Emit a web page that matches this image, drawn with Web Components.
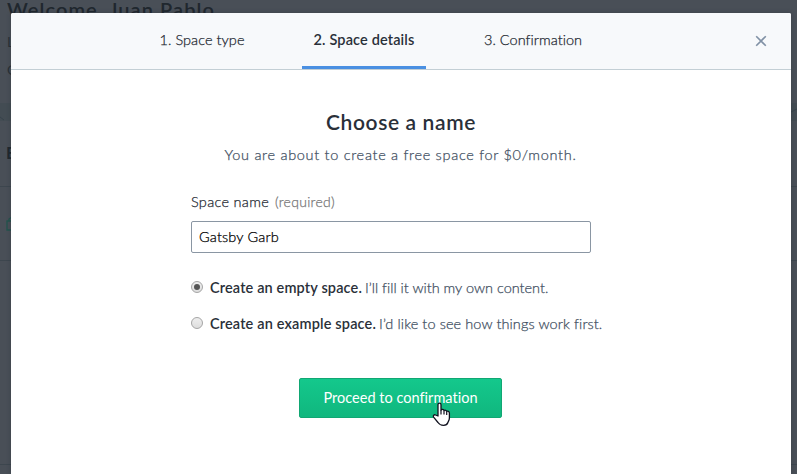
<!DOCTYPE html>
<html lang="en"><head><meta charset="utf-8"><title>Create space</title>
<style>html,body{margin:0;height:100%;overflow:hidden}body{font-family:Lato,"Open Sans",sans-serif;background:#494f57}</style></head>
<body><space-app></space-app>
<script>
const define=(name,html,init)=>customElements.define(name,class extends HTMLElement{
  connectedCallback(){if(this.shadowRoot)return;this.attachShadow({mode:'open'}).innerHTML=html;if(init)init(this,this.shadowRoot);}
});
// A single line of text tracked to a given width.
define('fit-text','<style>:host{display:block;white-space:nowrap;width:max-content}span{display:inline-block}</style><span><slot></slot></span>',(el,root)=>{
  const s=root.querySelector('span'),w=+el.getAttribute('w');
  requestAnimationFrame(()=>{const n=el.textContent.length;const d=(w-s.getBoundingClientRect().width)/n;s.style.letterSpacing=d+'px';});
});
define('page-behind',`<style>
:host{display:block;height:474px;background:#494f57;color:#20272e;overflow:hidden}
.hero{height:103px;box-sizing:border-box;padding-left:7px}
h1{font-size:20px;line-height:19px;font-weight:600;margin:0;height:28px}
p{margin:0;font-size:14px;line-height:28px;color:#292f35}
.strip{height:18px;background:#434c53;display:flex;justify-content:space-between;align-items:flex-end}
.strip svg{display:block}
.row{box-sizing:border-box;border-bottom:1px solid #3d464e}
.a{height:66px;padding:20px 0 0 6px;font-size:17px;line-height:24px;font-weight:700}
.b{height:74px;padding:29px 0 0 6px}.c{height:204px}
</style><div class="hero"><h1><fit-text w="208">Welcome, Juan Pablo</fit-text></h1><p>L</p><p>C</p></div>
<div class="strip"><svg width="12" height="18"><path d="M0 14l4 3" stroke="#37434b"/></svg><svg width="8" height="18"><path d="M0 10l8-4" stroke="#37434b"/></svg></div>
<div class="row a">E</div><div class="row b"><svg width="12" height="16" fill="none" stroke="#23544d" stroke-width="1.3"><path d="M1 5h10v9H1zM3 5V3l3-2 3 2v2"/></svg></div><div class="row c"></div>`);
define('step-tab',`<style>
:host{display:block;width:124px;height:56px;box-sizing:border-box;padding-top:17px;color:#1f2a33;font-size:14.5px;line-height:20px;font-weight:300}
:host([active]){border-bottom:3px solid #4a90e2;font-weight:600;color:#2a3039;-webkit-text-stroke:0}
div{display:flex;justify-content:center}</style><div><slot></slot></div>`);
define('close-button',`<style>:host{display:block;width:12px;height:12px}svg{display:block}</style>
<svg width="12" height="12" viewBox="0 0 12 12"><path d="M1.2 1.2l9.6 9.6M10.8 1.2L1.2 10.8" stroke="#8091a5" stroke-width="1.6"/></svg>`);
define('text-field',`<style>:host{display:flex;align-items:center;box-sizing:border-box;width:400px;height:32px;border:1px solid #8a96a3;border-radius:2px;padding:0 7px 1px;font-size:14.5px;line-height:20px;color:#000}</style><slot></slot>`);
define('radio-option',`<style>
:host{display:flex;align-items:center;height:20px;font-size:14.5px;line-height:20px;color:#3f4f62}
i{flex:none;width:12px;height:12px;box-sizing:border-box;border:1px solid #a5a5a5;border-radius:50%;background:linear-gradient(#eee,#ddd);display:grid;place-items:center;margin:-2px 7px 0 0}
:host([checked]) i::after{content:"";width:6px;height:6px;border-radius:50%;background:#555}
slot{display:block;flex:none}.h{font-weight:600;color:#2a3039;margin-right:3px;-webkit-text-stroke:0}</style><i></i><slot class="h" name="title"></slot><slot></slot>`);
define('action-button',`<style>:host{display:flex;justify-content:center;box-sizing:border-box;width:203px;height:40px;padding-top:9px;border:1px solid #11a773;border-radius:2px;background:linear-gradient(#14c88c,#10b77e);color:#fff;font-size:14.5px;font-weight:400;line-height:20px;-webkit-text-stroke:0}</style><slot></slot>`);
define('hand-cursor',`<style>:host{display:block}svg{display:block}</style><svg width="19" height="25" viewBox="0 0 19 25"><path d="M6 14V2.7C6 .5 9 .5 9 2.7V8c.8-1 2.6-.7 3 .6.9-.7 2.4-.4 2.7.8 1-.6 2.7 0 2.7 1.6V16c0 2-1 3.2-1.5 4.5-.5 1.7-2 2.8-4.4 2.8S7.300 22.500 6 20.500L1.600 15.200c-1-1.600.7-3 2-2.200z" fill="#fff" stroke="#11121f" stroke-width="1.3" stroke-linejoin="round"/><path d="M9 8v4.500M12 9v3.500M14.700 10v3" stroke="#11121f" stroke-width="1.200"/></svg>`);
define('space-dialog',`<style>
:host{display:block;width:780px;height:461px;background:#fff;border-radius:2px 2px 0 0;box-shadow:0 0 4px #252b3266;font-weight:300;-webkit-text-stroke:.25px currentColor}
header{height:57px;box-sizing:border-box;background:#f7f9fb;border-bottom:1px solid #c3cfd5;display:grid;grid-template-columns:129px 124px 38px 124px 45px 124px 1fr;border-radius:2px 2px 0 0}
.t1{grid-column:2}.t2{grid-column:4}.t3{grid-column:6}
close-button{grid-column:7;justify-self:end;margin:22px 24px 0 0}
main{display:flex;flex-direction:column;align-items:center}
h2{margin:38px 0 0;font-size:21px;line-height:28px;font-weight:600;color:#2a3039;-webkit-text-stroke:0}
.sub{margin-top:9px;font-size:14.5px;line-height:20px;color:#3f4f62;margin-left:-1px}
form{width:400px;margin:27px 20px 0 0}.label{display:flex;gap:6px;font-size:14.5px;line-height:20px;color:#1f2a33}.req{color:#777;font-size:14px}
text-field{margin-top:9px}radio-option{margin-top:16px}.first{margin-top:25px}
action-button{margin-top:44px;margin-left:-1px}
</style><header><step-tab class="t1"><fit-text w="85">1. Space type</fit-text></step-tab><step-tab class="t2" active><fit-text w="101">2. Space details</fit-text></step-tab><step-tab class="t3"><fit-text w="98">3. Confirmation</fit-text></step-tab><close-button></close-button></header>
<main><h2><fit-text w="150">Choose a name</fit-text></h2><div class="sub"><fit-text w="352">You are about to create a free space for $0/month.</fit-text></div>
<form><div class="label"><fit-text w="78">Space name</fit-text><fit-text class="req" w="60">(required)</fit-text></div><text-field><fit-text w="80">Gatsby Garb</fit-text></text-field>
<radio-option class="first" checked><fit-text slot="title" w="152">Create an empty space.</fit-text><fit-text w="183">I’ll fill it with my own content.</fit-text></radio-option>
<radio-option><fit-text slot="title" w="166">Create an example space.</fit-text><fit-text w="223">I’d like to see how things work first.</fit-text></radio-option></form>
<action-button><fit-text w="154">Proceed to confirmation</fit-text></action-button></main>`);
define('space-app',`<style>:host{display:block;position:relative;width:797px;height:474px;overflow:hidden}space-dialog{position:absolute;left:11px;top:13px}hand-cursor{position:absolute;left:432px;top:402px}</style><page-behind></page-behind><space-dialog></space-dialog><hand-cursor></hand-cursor>`);
</script></body></html>
